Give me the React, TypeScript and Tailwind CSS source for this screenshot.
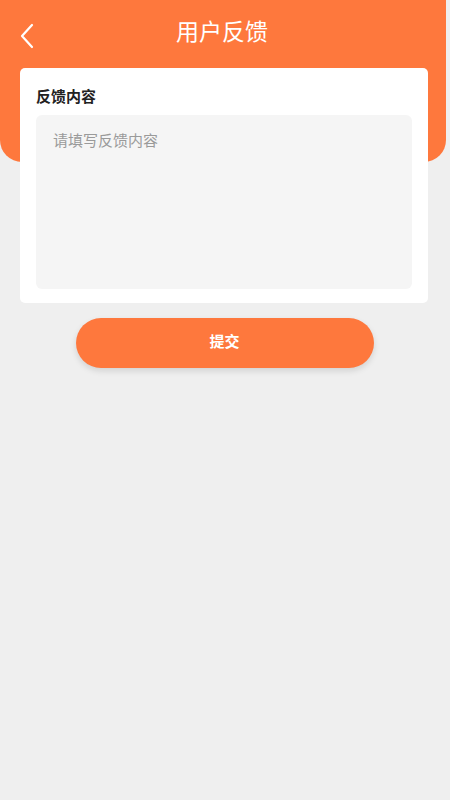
import React from "react";

export default function App() {
  return (
    <div
      className="relative w-[450px] h-[800px] bg-[#efefef] overflow-hidden"
      style={{ fontFamily: '"Noto Sans CJK SC", "Noto Sans", sans-serif' }}
    >
      <div className="absolute left-0 top-0 w-[446px] h-[162px] bg-[#fe783d] rounded-b-[22px]" />
      <div className="relative">
        <div className="h-[66px] flex items-center justify-center relative">
          <svg
            className="absolute left-[18px] top-[23px]"
            width="18"
            height="26"
            viewBox="0 0 18 26"
            fill="none"
          >
            <path d="M14 2 L4 13 L14 24" stroke="#ffffff" strokeWidth="2.2" strokeLinecap="round" strokeLinejoin="round" />
          </svg>
          <span className="text-white text-[23px] font-normal leading-none -mt-[5px] pr-[6px]">用户反馈</span>
        </div>
        <div className="mx-[20px] w-[408px] mt-[2px] bg-white rounded-[5px] px-[16px] pt-[20px] pb-[14px]">
          <div className="text-[15px] font-bold text-[#222] leading-none">反馈内容</div>
          <div className="mt-[12px] h-[174px] bg-[#f5f5f5] rounded-[6px] px-[17px] pt-[17px]">
            <div className="text-[15px] text-[#9a9a9a] leading-none">请填写反馈内容</div>
          </div>
        </div>
        <div className="mt-[15px] flex justify-center pr-[1px]">
          <button className="w-[298px] h-[50px] rounded-full bg-[#fe783d] text-white text-[15px] font-bold shadow-[0_3px_6px_rgba(0,0,0,0.12)] pb-[4px]">
            提交
          </button>
        </div>
      </div>
    </div>
  );
}
